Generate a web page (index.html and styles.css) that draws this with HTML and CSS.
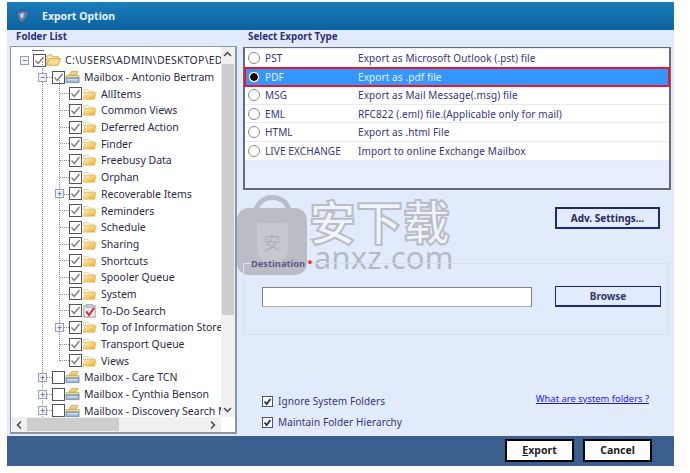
FILE: index.html
```html
<!DOCTYPE html>
<html lang="en">
<head>
    <meta charset="UTF-8">
    <meta name="viewport" content="width=device-width, initial-scale=1.0">
    <title>Export Option</title>
    <link rel="stylesheet" href="styles.css">
</head>
<body>
    <svg class="defs" width="0" height="0">
        <defs>
            <linearGradient id="gold" x1="0" y1="0" x2="1" y2="1">
                <stop offset="0" stop-color="#fff3c4"/>
                <stop offset="1" stop-color="#efa91c"/>
            </linearGradient>
        </defs>
        <symbol id="check" viewBox="0 0 13 13">
            <rect x="0.5" y="0.5" width="12" height="12" fill="#fff" stroke="#555"/>
            <path d="M2.5 6.5 L5.2 9.5 L10.5 3" fill="none" stroke="#777" stroke-width="1.3"/>
        </symbol>
        <symbol id="empty" viewBox="0 0 13 13">
            <rect x="0.5" y="0.5" width="12" height="12" fill="#fff" stroke="#555"/>
        </symbol>
        <symbol id="folder" viewBox="0 0 16 13">
            <path d="M1 4 L2 1.5 H6.5 L8 3.5 H13 V5 H1 Z" fill="#f8f1d8" stroke="#cfc6a6" stroke-width="0.7"/>
            <path d="M1 12 L3 5 H15 L13.5 12 Z" fill="url(#gold)" stroke="#d9b45c" stroke-width="0.6"/>
        </symbol>
        <symbol id="folder-open" viewBox="0 0 16 13">
            <path d="M1 12 V2 L2 1 H6 L7 3 H13 V5" fill="#fdf0c4" stroke="#d9a441"/>
            <path d="M1 12 L3.5 5 H15.5 L13 12 Z" fill="#fbdc93" stroke="#d9a441"/>
        </symbol>
        <symbol id="mailbox" viewBox="0 0 16 14">
            <path d="M4 5 L7 1 H14 L12 5 Z" fill="#f4d268" stroke="#b79a4c" stroke-width="0.7"/>
            <path d="M1 5.5 H15 V8 H1 Z" fill="#f7e29a" stroke="#a99a6c" stroke-width="0.7"/>
            <path d="M1 8 H15 V13 H1 Z" fill="#9db7d6" stroke="#5c7696" stroke-width="0.7"/>
            <path d="M2 10 H14" stroke="#e6eef7" stroke-width="1"/>
        </symbol>
        <symbol id="todo" viewBox="0 0 16 15">
            <rect x="2" y="2" width="12" height="12" fill="#eef0f4" stroke="#8b93a3"/>
            <rect x="5" y="0.5" width="6" height="3" fill="#c9ccd4" stroke="#8b93a3" stroke-width="0.6"/>
            <path d="M4.5 8 L7.5 12 L13 4" fill="none" stroke="#e0312b" stroke-width="2.2"/>
        </symbol>
    </svg>

    <div class="window">
        <div class="titlebar">
            <svg class="app-icon" width="15" height="13" viewBox="0 0 15 13">
                <path d="M2 3 L7 0.5 L14 2.5 L11 9 L6 12.5 L3 8 Z" fill="#5f7fa3" stroke="#2f4f78" stroke-width="0.7"/>
                <path d="M5 4 L9 3 L8 8 L6 8 Z" fill="#c6d3e2"/>
            </svg>
            <span>Export Option</span>
        </div>

        <div class="main">
            <div class="left-panel">
                <div class="panel-title">Folder List</div>
                <div class="tree-box">
                    <div class="tree-view">
                        <div class="tree-row root-row">
                            <span class="expander">&minus;</span>
                            <svg class="cb"><use href="#check"/></svg>
                            <svg class="ic"><use href="#folder-open"/></svg>
                            <span class="root-label">C:\USERS\ADMIN\DESKTOP\ED</span>
                        </div>
                        <ul class="mailboxes">
                            <li class="tree-row">
                                <span class="expander">&minus;</span>
                                <svg class="cb"><use href="#check"/></svg>
                                <svg class="ic"><use href="#mailbox"/></svg>
                                <span>Mailbox - Antonio Bertram</span>
                            </li>
                            <li>
                                <ul class="folders">
                                    <li class="tree-row"><svg class="cb"><use href="#check"/></svg><svg class="ic"><use href="#folder"/></svg><span>AllItems</span></li>
                                    <li class="tree-row"><svg class="cb"><use href="#check"/></svg><svg class="ic"><use href="#folder"/></svg><span>Common Views</span></li>
                                    <li class="tree-row"><svg class="cb"><use href="#check"/></svg><svg class="ic"><use href="#folder"/></svg><span>Deferred Action</span></li>
                                    <li class="tree-row"><svg class="cb"><use href="#check"/></svg><svg class="ic"><use href="#folder"/></svg><span>Finder</span></li>
                                    <li class="tree-row"><svg class="cb"><use href="#check"/></svg><svg class="ic"><use href="#folder"/></svg><span>Freebusy Data</span></li>
                                    <li class="tree-row"><svg class="cb"><use href="#check"/></svg><svg class="ic"><use href="#folder"/></svg><span>Orphan</span></li>
                                    <li class="tree-row"><span class="expander">+</span><svg class="cb"><use href="#check"/></svg><svg class="ic"><use href="#folder"/></svg><span>Recoverable Items</span></li>
                                    <li class="tree-row"><svg class="cb"><use href="#check"/></svg><svg class="ic"><use href="#folder"/></svg><span>Reminders</span></li>
                                    <li class="tree-row"><svg class="cb"><use href="#check"/></svg><svg class="ic"><use href="#folder"/></svg><span>Schedule</span></li>
                                    <li class="tree-row"><svg class="cb"><use href="#check"/></svg><svg class="ic"><use href="#folder"/></svg><span>Sharing</span></li>
                                    <li class="tree-row"><svg class="cb"><use href="#check"/></svg><svg class="ic"><use href="#folder"/></svg><span>Shortcuts</span></li>
                                    <li class="tree-row"><svg class="cb"><use href="#check"/></svg><svg class="ic"><use href="#folder"/></svg><span>Spooler Queue</span></li>
                                    <li class="tree-row"><svg class="cb"><use href="#check"/></svg><svg class="ic"><use href="#folder"/></svg><span>System</span></li>
                                    <li class="tree-row"><svg class="cb"><use href="#check"/></svg><svg class="ic"><use href="#todo"/></svg><span>To-Do Search</span></li>
                                    <li class="tree-row"><span class="expander">+</span><svg class="cb"><use href="#check"/></svg><svg class="ic"><use href="#folder"/></svg><span>Top of Information Store</span></li>
                                    <li class="tree-row"><svg class="cb"><use href="#check"/></svg><svg class="ic"><use href="#folder"/></svg><span>Transport Queue</span></li>
                                    <li class="tree-row"><svg class="cb"><use href="#check"/></svg><svg class="ic"><use href="#folder"/></svg><span>Views</span></li>
                                </ul>
                            </li>
                            <li class="tree-row"><span class="expander">+</span><svg class="cb"><use href="#empty"/></svg><svg class="ic"><use href="#mailbox"/></svg><span>Mailbox - Care TCN</span></li>
                            <li class="tree-row"><span class="expander">+</span><svg class="cb"><use href="#empty"/></svg><svg class="ic"><use href="#mailbox"/></svg><span>Mailbox - Cynthia Benson</span></li>
                            <li class="tree-row"><span class="expander">+</span><svg class="cb"><use href="#empty"/></svg><svg class="ic"><use href="#mailbox"/></svg><span>Mailbox - Discovery Search Mailbox</span></li>
                        </ul>
                    </div>
                    <div class="scroll-v">
                        <svg class="arrow" width="13" height="14" viewBox="0 0 13 14"><path d="M3 9 L6.5 5.5 L10 9" fill="none" stroke="#444" stroke-width="1.5"/></svg>
                        <div class="thumb-v"></div>
                        <svg class="arrow" width="13" height="14" viewBox="0 0 13 14"><path d="M3 5 L6.5 8.5 L10 5" fill="none" stroke="#444" stroke-width="1.5"/></svg>
                    </div>
                    <div class="scroll-h">
                        <svg class="arrow" width="16" height="14" viewBox="0 0 16 14"><path d="M10 3.5 L6.5 7 L10 10.5" fill="none" stroke="#444" stroke-width="1.5"/></svg>
                        <div class="track-h"><div class="thumb-h"></div></div>
                        <svg class="arrow" width="16" height="14" viewBox="0 0 16 14"><path d="M6 3.5 L9.5 7 L6 10.5" fill="none" stroke="#444" stroke-width="1.5"/></svg>
                    </div>
                </div>
            </div>

            <div class="right-panel">
                <div class="panel-title">Select Export Type</div>
                <div class="type-list">
                    <div class="type-row"><span class="radio"></span><span class="type-name">PST</span><span>Export as Microsoft Outlook (.pst) file</span></div>
                    <div class="type-row selected"><span class="radio on"></span><span class="type-name">PDF</span><span>Export as .pdf file</span></div>
                    <div class="type-row"><span class="radio"></span><span class="type-name">MSG</span><span>Export as Mail Message(.msg) file</span></div>
                    <div class="type-row"><span class="radio"></span><span class="type-name">EML</span><span>RFC822 (.eml) file.(Applicable only for mail)</span></div>
                    <div class="type-row"><span class="radio"></span><span class="type-name">HTML</span><span>Export as .html File</span></div>
                    <div class="type-row"><span class="radio"></span><span class="type-name">LIVE EXCHANGE</span><span>Import to online Exchange Mailbox</span></div>
                </div>

                <div class="adv-row">
                    <button class="btn-adv">Adv. Settings...</button>
                </div>

                <fieldset class="destination">
                    <legend>Destination <span class="req">*</span></legend>
                    <div class="dest-row">
                        <input class="dest-input" type="text">
                        <button class="btn-browse">Browse</button>
                    </div>
                </fieldset>

                <div class="options">
                    <div class="option-list">
                        <label class="option"><svg width="11" height="11" viewBox="0 0 13 13"><rect x="0.5" y="0.5" width="12" height="12" fill="#fff" stroke="#2f3a78"/><path d="M3 6.5 L5.5 9.5 L10 3.5" fill="none" stroke="#23284f" stroke-width="2"/></svg>Ignore System Folders</label>
                        <label class="option"><svg width="11" height="11" viewBox="0 0 13 13"><rect x="0.5" y="0.5" width="12" height="12" fill="#fff" stroke="#2f3a78"/><path d="M3 6.5 L5.5 9.5 L10 3.5" fill="none" stroke="#23284f" stroke-width="2"/></svg>Maintain Folder Hierarchy</label>
                    </div>
                    <a class="help-link" href="#">What are system folders ?</a>
                </div>
            </div>
        </div>

        <div class="footer">
            <button class="btn-footer"><u>E</u>xport</button>
            <button class="btn-footer">Cancel</button>
        </div>

        <!-- download site watermark, the form sits on top of it -->
        <div class="watermark">
            <div class="wm-lock">
                <div class="wm-shackle"></div>
                <div class="wm-body"><div class="wm-shield">安</div></div>
            </div>
            <div class="wm-text">
                <div class="wm-cn">安下载</div>
                <div class="wm-en">anxz.com</div>
            </div>
        </div>
    </div>
</body>
</html>
```

FILE: styles.css
```css
* {
    box-sizing: border-box;
}
body {
    margin: 0;
    background-color: #fff;
    font-family: "Noto Sans", "Open Sans", sans-serif;
    overflow: hidden;
}
.defs {
    position: absolute;
}
ul {
    list-style: none;
    margin: 0;
    padding: 0;
}
.window {
    position: relative;
    width: 667px;
    height: 464px;
    margin: 2px 0 0 7px;
    display: flex;
    flex-direction: column;
    background-color: #e1ebfc;
}

/* Title bar */
.titlebar {
    height: 28px;
    flex: none;
    display: flex;
    align-items: center;
    padding-left: 8px;
    gap: 12px;
    background: linear-gradient(#1a7cba, #0c639e);
    color: #e8f0f8;
    font-size: 10.5px;
    font-weight: 700;
}
.app-icon {
    flex: none;
}

/* Main area */
.main {
    flex: 1;
    display: flex;
    min-height: 0;
}
.left-panel {
    width: 236px;
    padding: 0 0 2px 3px;
    display: flex;
    flex-direction: column;
    flex: none;
}
.panel-title {
    height: 16px;
    padding-left: 6px;
    font-size: 9.8px;
    line-height: 14px;
    font-weight: 700;
    color: #2f2f7a;
}

/* Tree */
.tree-box {
    flex: 1;
    width: 227px;
    display: grid;
    grid-template-columns: 1fr 14px;
    grid-template-rows: 1fr 15px;
    background-color: #fff;
    border: 1px solid #8c96a3;
    border-right-width: 2px;
    border-bottom-width: 2px;
    min-height: 0;
}
.tree-view {
    overflow: hidden;
    padding-top: 5px;
    font-size: 10.5px;
    color: #2b2b44;
    white-space: nowrap;
}
.tree-row {
    position: relative;
    height: 16.7px;
    display: flex;
    align-items: center;
}
.cb {
    width: 13px;
    height: 13px;
    flex: none;
}
.ic {
    width: 15px;
    height: 14px;
    flex: none;
    margin: 0 4px 0 0;
}
.expander {
    position: absolute;
    width: 9px;
    height: 9px;
    border: 1px solid #9aa0aa;
    background-color: #eef1f6;
    color: #3a4a80;
    font-size: 9px;
    line-height: 7px;
    text-align: center;
}
.root-row {
    padding-left: 22px;
}
.root-row::before {
    content: "";
    position: absolute;
    left: 21px;
    top: -2px;
    width: 12px;
    border-top: 1px solid #666;
}
.root-row .expander {
    left: 9px;
    top: 4px;
}
.root-label {
    letter-spacing: 0.25px;
}
.mailboxes {
    position: relative;
    padding-left: 41px;
}
.mailboxes::before {
    content: "";
    position: absolute;
    left: 31px;
    top: -8px;
    bottom: 0;
    border-left: 1px dotted #888;
}
.mailboxes > .tree-row::before,
.folders > .tree-row::before {
    content: "";
    position: absolute;
    left: -9px;
    width: 9px;
    top: 8px;
    border-top: 1px dotted #888;
}
.mailboxes > .tree-row .expander {
    left: -14px;
    top: 4px;
    z-index: 1;
}
.folders {
    position: relative;
    padding-left: 17px;
}
.folders::before {
    content: "";
    position: absolute;
    left: 7px;
    top: -8px;
    bottom: 8px;
    border-left: 1px dotted #888;
}
.folders > .tree-row .expander {
    left: -14px;
}

/* Scrollbars */
.scroll-v {
    display: flex;
    flex-direction: column;
    justify-content: space-between;
    background-color: #f0f0f0;
    grid-row: 1;
    grid-column: 2;
}
.thumb-v {
    flex: 1;
    margin: 3px 1px 88px;
    background-color: #cdcdcd;
}
.scroll-h {
    grid-column: 1;
    grid-row: 2;
    display: flex;
    align-items: center;
    background-color: #f0f0f0;
}
.track-h {
    flex: 1;
}
.thumb-h {
    width: 92px;
    height: 13px;
    background-color: #cdcdcd;
}

/* Right side */
.right-panel {
    position: relative;
    z-index: 1;
    flex: 1;
    display: flex;
    flex-direction: column;
    padding: 0 3px 0 0;
    min-width: 0;
}
.right-panel .panel-title {
    padding-left: 5px;
    height: 17px;
}
.type-list {
    height: 143px;
    flex: none;
    padding-top: 1px;
    background-color: #e8effc;
    border: 1px solid #666c78;
    border-width: 1px 2px 2px 2px;
    font-size: 10px;
    letter-spacing: 0.1px;
    color: #35357e;
}
.type-row {
    height: 18.6px;
    display: flex;
    align-items: center;
    padding-left: 3px;
    background-color: #fff;
    border-bottom: 1px solid #e4ebf6;
}
.type-row.selected {
    height: 20.6px;
    margin: -1px -1px -1px;
    position: relative;
    background-color: #3496ff;
    border: 2px solid #e8182c;
    color: #e6f0ff;
    padding-left: 2px;
}
.radio {
    width: 12px;
    height: 12px;
    flex: none;
    border-radius: 50%;
    background-color: #fff;
    border: 1px solid #8a8a8a;
    margin-right: 5px;
}
.radio.on {
    background: radial-gradient(circle, #000 0 3.5px, #fff 4px);
}
.type-name {
    width: 93px;
    flex: none;
}
.adv-row {
    display: flex;
    justify-content: flex-end;
    padding: 17px 11px 0 0;
}
button {
    font-family: "Noto Sans", "Open Sans", sans-serif;
    cursor: pointer;
}
.btn-adv {
    width: 105px;
    height: 22px;
    padding: 0;
    background-color: #e1ebfc;
    border: 2px solid #1c2a78;
    font-size: 10px;
    font-weight: 700;
    color: #28285e;
}
.destination {
    margin: 28px 2px 0 0;
    padding: 16px 7px 0 18px;
    height: 78px;
    min-width: 0;
    border: 1px solid #d9e0ea;
}
.destination legend {
    padding: 0;
    margin-left: -11px;
    font-size: 9.3px;
    font-weight: 700;
    color: #5b5b8e;
}
.req {
    color: #f00;
}
.dest-row {
    display: flex;
    align-items: center;
    justify-content: space-between;
}
.dest-input {
    width: 270px;
    height: 20px;
    background-color: #fff;
    border: 1px solid #808080;
    border-bottom-color: #aaa;
}
.btn-browse {
    width: 106px;
    height: 21px;
    padding: 0;
    background-color: #e1ebfc;
    border: 1px solid #1c2a78;
    border-bottom-width: 2px;
    font-size: 10px;
    font-weight: 700;
    color: #35356e;
}
.options {
    margin-top: auto;
    display: flex;
    justify-content: space-between;
    align-items: flex-start;
    padding: 0 22px 7px 19px;
    font-size: 10px;
    letter-spacing: 0.1px;
    color: #35357e;
}
.option-list {
    display: flex;
    flex-direction: column;
    gap: 7px;
}
.option {
    display: flex;
    align-items: center;
    gap: 5px;
    height: 14px;
}
.help-link {
    color: #1a1ae6;
    font-size: 9.4px;
    letter-spacing: 0;
    margin-top: -2px;
}

/* Bottom bar */
.footer {
    height: 30px;
    flex: none;
    display: flex;
    justify-content: flex-end;
    align-items: center;
    gap: 9px;
    padding: 0 22px 2px 0;
    background-color: #3a5e8e;
}
.btn-footer {
    width: 69px;
    height: 23px;
    padding: 0;
    background-color: #fff;
    border: 2px solid #000;
    font-size: 10.5px;
    font-weight: 700;
    color: #222;
}

/* Watermark */
.watermark {
    position: absolute;
    left: 230px;
    top: 193px;
    z-index: 0;
    display: flex;
    gap: 2px;
    pointer-events: none;
}
.wm-lock {
    position: relative;
    width: 70px;
    height: 81px;
}
.wm-shackle {
    position: absolute;
    left: 16px;
    top: 0;
    width: 39px;
    height: 30px;
    border: 5px solid #b9bdc6;
    border-bottom: 0;
    border-radius: 19px 19px 0 0;
}
.wm-body {
    position: absolute;
    left: 0;
    top: 13px;
    width: 70px;
    height: 67px;
    border-radius: 12px;
    background-color: #b9bdc6;
    display: flex;
    align-items: center;
    justify-content: center;
}
.wm-shield {
    width: 31px;
    height: 41px;
    border-radius: 3px 3px 16px 16px;
    background-color: #c4c8cf;
    color: #aeb2ba;
    font-family: "Noto Sans CJK SC", sans-serif;
    font-size: 17px;
    line-height: 38px;
    text-align: center;
    margin-top: 4px;
}
.wm-cn {
    font-family: "Noto Sans CJK SC", sans-serif;
    font-size: 47px;
    line-height: 50px;
    font-weight: 700;
    color: #f0f5fd;
    -webkit-text-stroke: 2px #b9bdc6;
}
.wm-en {
    font-family: "Open Sans", sans-serif;
    font-size: 31px;
    line-height: 30px;
    color: #b4b8c0;
    margin: -3px 0 0 5px;
    letter-spacing: 0.3px;
}
```
